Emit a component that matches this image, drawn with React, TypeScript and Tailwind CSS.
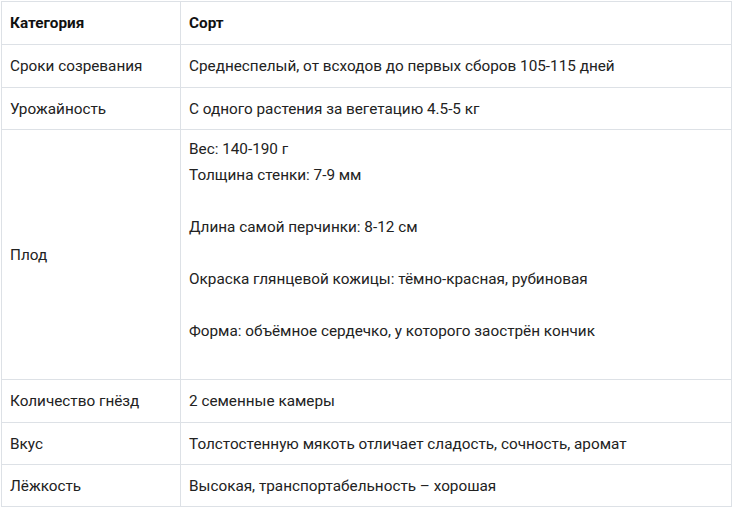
export default function App() {
  const rows: [string, string, string][] = [
    ["Сроки созревания", "Среднеспелый, от всходов до первых сборов 105-115 дней", "h-[43px]"],
    ["Урожайность", "С одного растения за вегетацию 4.5-5 кг", "h-[42px]"],
  ];
  const rows2: [string, string, string][] = [
    ["Количество гнёзд", "2 семенные камеры", "h-[43px]"],
    ["Вкус", "Толстостенную мякоть отличает сладость, сочность, аромат", "h-[42px]"],
    ["Лёжкость", "Высокая, транспортабельность – хорошая", "h-[42px]"],
  ];
  const td = "border border-[#dde1e6] px-[8px] py-0 align-middle";
  return (
    <div className="bg-white w-[734px] h-[510px] pt-px pl-px" style={{ fontFamily: "Roboto, 'Noto Sans', sans-serif" }}>
      <table className="border-collapse table-fixed w-[731px] text-[15.3px] leading-[26px] text-[#222]">
        <colgroup>
          <col className="w-[179px]" />
          <col />
        </colgroup>
        <tbody>
          <tr className="h-[43px]">
            <td className={td + " font-bold text-[#111]"}>Категория</td>
            <td className={td + " font-bold text-[#111]"}>Сорт</td>
          </tr>
          {rows.map(([a, b, h]) => (
            <tr key={a} className={h}>
              <td className={td}>{a}</td>
              <td className={td}>{b}</td>
            </tr>
          ))}
          <tr className="h-[250px]">
            <td className={td}>Плод</td>
            <td className="border border-[#dde1e6] px-[8px] pt-[6px] pb-0 align-top">
              <p className="mb-[26px]">
                Вес: 140-190 г
                <br />
                Толщина стенки: 7-9 мм
              </p>
              <p className="mb-[26px]">Длина самой перчинки: 8-12 см</p>
              <p className="mb-[26px]">Окраска глянцевой кожицы: тёмно-красная, рубиновая</p>
              <p>Форма: объёмное сердечко, у которого заострён кончик</p>
            </td>
          </tr>
          {rows2.map(([a, b, h]) => (
            <tr key={a} className={h}>
              <td className={td}>{a}</td>
              <td className={td}>{b}</td>
            </tr>
          ))}
        </tbody>
      </table>
    </div>
  );
}
